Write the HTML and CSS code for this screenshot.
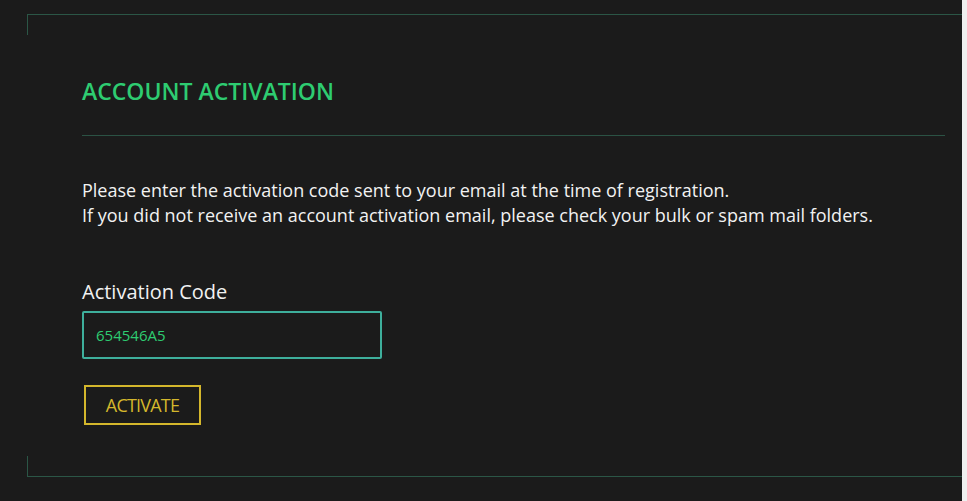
FILE: index.html
```html
<!DOCTYPE html>
<html lang="en">
<head>
  <meta charset="UTF-8">
  <meta name="viewport" content="width=device-width, initial-scale=1.0">
  <title>Account Activation</title>
  <link rel="stylesheet" href="styles.css">
</head>
<body>

  <div class="page">
    <!-- Блок активації акаунта -->
    <div class="panel">
      <h2 class="title">ACCOUNT ACTIVATION</h2>
      <hr class="divider">

      <p class="info">
        Please enter the activation code sent to your email at the time of registration.<br>
        If you did not receive an account activation email, please check your bulk or spam mail folders.
      </p>

      <form class="activate-form">
        <label for="code" class="field-label">Activation Code</label>
        <input type="text" id="code" name="code" class="code-input" value="654546A5">
        <button type="submit" class="activate-button">ACTIVATE</button>
      </form>
    </div>

    <div class="scrollbar"></div>
  </div>

</body>
</html>
```

FILE: styles.css
```css
/* Фон сторінки */
html, body {
  margin: 0;
  height: 100%;
}
body {
  background-color: #1b1b1b;
  font-family: "Open Sans", Arial, sans-serif;
  color: #f2f2f2;
}
.page {
  display: flex;
  height: 100%;
}
.scrollbar {
  flex: 0 0 5px;
  background-color: #efefef;
}
/* Рамка панелі */
.panel {
  position: relative;
  flex: 1;
  margin: 14px 0 0 27px;
  height: 463px;
  box-sizing: border-box;
  border-top: 1px solid #2b5646;
  border-bottom: 1px solid #2b5646;
  padding: 0 17px 0 55px;
}
.panel::before,
.panel::after {
  content: "";
  position: absolute;
  left: 0;
  width: 1px;
  height: 20px;
  background-color: #2b5646;
}
.panel::before {
  top: 0;
}
.panel::after {
  bottom: 0;
}
.title {
  margin: 0;
  padding-top: 61px;
  font-size: 23px;
  font-weight: 600;
  color: #2ecc71;
  line-height: 30px;
}
.divider {
  margin: 29px 0 0;
  border: 0;
  border-top: 1px solid #2b5244;
}
.info {
  margin: 42px 0 0;
  font-size: 18px;
  line-height: 25px;
}
.activate-form {
  margin-top: 51px;
}
.field-label {
  display: block;
  font-size: 20px;
  line-height: 26px;
}
.code-input {
  display: block;
  width: 300px;
  height: 48px;
  margin-top: 6px;
  box-sizing: border-box;
  padding: 0 12px;
  background-color: #1b1b1b;
  border: 2px solid #3eaf9c;
  border-radius: 2px;
  color: #2ecc71;
  font-family: "Open Sans", Arial, sans-serif;
  font-size: 15px;
  outline: none;
}
.activate-button {
  display: block;
  margin: 26px 0 0 2px;
  width: 117px;
  height: 40px;
  background: transparent;
  border: 2px solid #d4b72c;
  color: #d4b72c;
  font-family: "Open Sans", Arial, sans-serif;
  font-size: 18px;
  letter-spacing: -0.8px;
}
```
